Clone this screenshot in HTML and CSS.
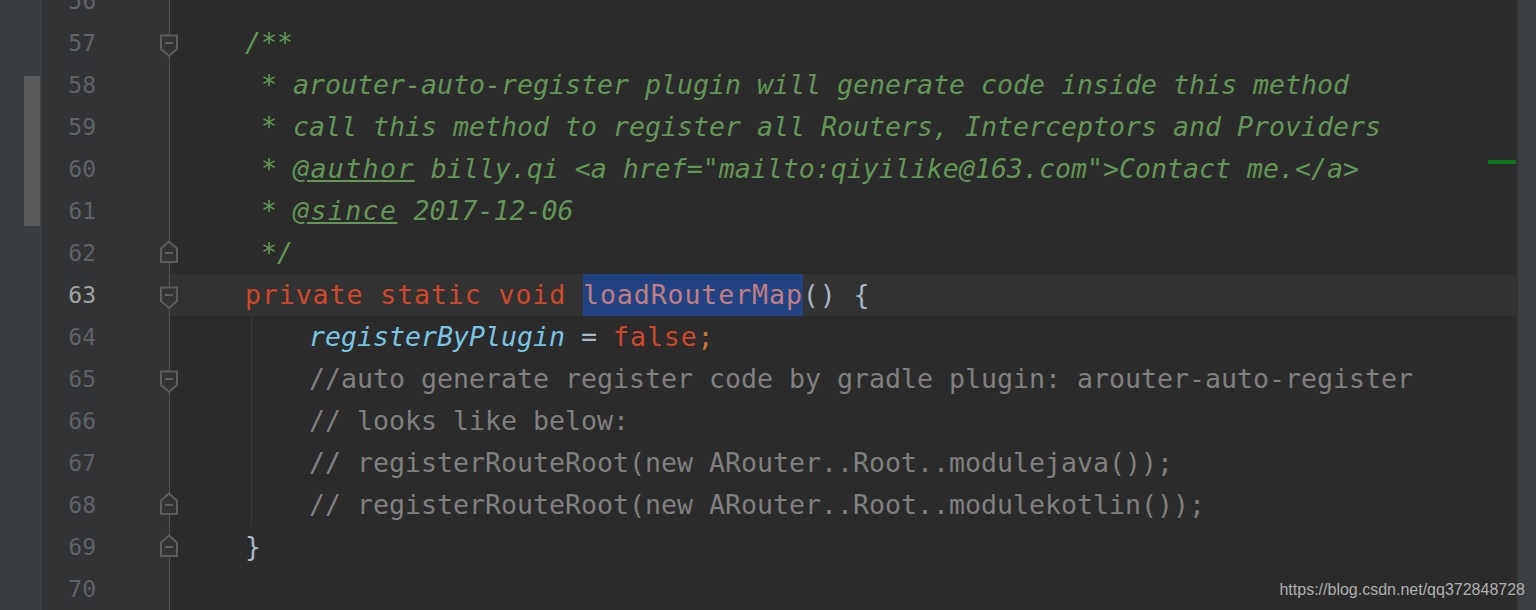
FILE: index.html
```html
<!DOCTYPE html>
<html lang="en">
<head>
    <meta charset="UTF-8">
    <meta name="viewport" content="width=device-width, initial-scale=1.0">
    <title>ARouter - LogisticsCenter.java</title>
    <link rel="stylesheet" href="styles.css">
</head>
<body>
    <div class="ide">
        <aside class="side">
            <div class="thumb"></div>
        </aside>

        <main class="editor">
            <div class="lines">
                <div class="row">
                    <div class="gutter"><span class="num">56</span></div>
                    <div class="code"></div>
                </div>
                <div class="row">
                    <div class="gutter">
                        <span class="num">57</span>
                        <svg class="fold fold-open" width="20" height="24" viewBox="0 0 20 24"><path d="M2 1.5 H18 V15 L10 22 L2 15 Z"/><line x1="6" y1="9" x2="14" y2="9"/></svg>
                    </div>
                    <div class="code"><span class="doc">    /**</span></div>
                </div>
                <div class="row">
                    <div class="gutter"><span class="num">58</span></div>
                    <div class="code"><span class="doc">     * arouter-auto-register plugin will generate code inside this method</span></div>
                </div>
                <div class="row">
                    <div class="gutter"><span class="num">59</span></div>
                    <div class="code"><span class="doc">     * call this method to register all Routers, Interceptors and Providers</span></div>
                </div>
                <div class="row">
                    <div class="gutter"><span class="num">60</span></div>
                    <div class="code"><span class="doc">     * <span class="tag">@author</span> billy.qi &lt;a href="mailto:qiyilike@163.com"&gt;Contact me.&lt;/a&gt;</span></div>
                </div>
                <div class="row">
                    <div class="gutter"><span class="num">61</span></div>
                    <div class="code"><span class="doc">     * <span class="tag">@since</span> 2017-12-06</span></div>
                </div>
                <div class="row">
                    <div class="gutter">
                        <span class="num">62</span>
                        <svg class="fold fold-close" width="20" height="24" viewBox="0 0 20 24"><path d="M2 22 H18 V8.5 L10 1.5 L2 8.5 Z"/><line x1="6" y1="13" x2="14" y2="13"/></svg>
                    </div>
                    <div class="code"><span class="doc">     */</span></div>
                </div>
                <div class="row">
                    <div class="gutter">
                        <span class="num current">63</span>
                        <svg class="fold fold-open" width="20" height="24" viewBox="0 0 20 24"><path d="M2 1.5 H18 V15 L10 22 L2 15 Z"/><line x1="6" y1="9" x2="14" y2="9"/></svg>
                    </div>
                    <div class="code current">    <span class="wide"><span class="kw">private static void</span> <span class="selected">loadRouterMap</span><span class="plain">() {</span></span></div>
                </div>
                <div class="row">
                    <div class="gutter"><span class="num">64</span></div>
                    <div class="code guide">        <span class="field">registerByPlugin</span> <span class="plain">=</span> <span class="kw wide">false</span><span class="semi">;</span></div>
                </div>
                <div class="row">
                    <div class="gutter">
                        <span class="num">65</span>
                        <svg class="fold fold-open" width="20" height="24" viewBox="0 0 20 24"><path d="M2 1.5 H18 V15 L10 22 L2 15 Z"/><line x1="6" y1="9" x2="14" y2="9"/></svg>
                    </div>
                    <div class="code guide">        <span class="comment">//auto generate register code by gradle plugin: arouter-auto-register</span></div>
                </div>
                <div class="row">
                    <div class="gutter"><span class="num">66</span></div>
                    <div class="code guide">        <span class="comment">// looks like below:</span></div>
                </div>
                <div class="row">
                    <div class="gutter"><span class="num">67</span></div>
                    <div class="code guide">        <span class="comment">// registerRouteRoot(new ARouter..Root..modulejava());</span></div>
                </div>
                <div class="row">
                    <div class="gutter">
                        <span class="num">68</span>
                        <svg class="fold fold-close" width="20" height="24" viewBox="0 0 20 24"><path d="M2 22 H18 V8.5 L10 1.5 L2 8.5 Z"/><line x1="6" y1="13" x2="14" y2="13"/></svg>
                    </div>
                    <div class="code guide">        <span class="comment">// registerRouteRoot(new ARouter..Root..modulekotlin());</span></div>
                </div>
                <div class="row">
                    <div class="gutter">
                        <span class="num">69</span>
                        <svg class="fold fold-close" width="20" height="24" viewBox="0 0 20 24"><path d="M2 22 H18 V8.5 L10 1.5 L2 8.5 Z"/><line x1="6" y1="13" x2="14" y2="13"/></svg>
                    </div>
                    <div class="code"><span class="plain">    }</span></div>
                </div>
                <div class="row">
                    <div class="gutter"><span class="num">70</span></div>
                    <div class="code"></div>
                </div>
            </div>

            <div class="stripe-mark"></div>
        </main>

        <div class="vscroll"></div>

        <div class="watermark">https://blog.csdn.net/qq372848728</div>
    </div>
</body>
</html>
```

FILE: styles.css
```css
/* General Reset */
* {
    margin: 0;
    padding: 0;
    box-sizing: border-box;
}

body {
    background-color: #2b2b2b;
    overflow: hidden;
}

.ide {
    position: relative;
    display: flex;
    width: 1536px;
    height: 610px;
    overflow: hidden;
}

/* Left tool strip with scroll thumb */
.side {
    width: 42px;
    flex-shrink: 0;
    background-color: #3b3e40;
}

.thumb {
    width: 16px;
    height: 150px;
    margin: 76px 0 0 24px;
    background-color: #595b5d;
}

/* Editor */
.editor {
    position: relative;
    flex: 1;
    background-color: #2b2b2b;
    overflow: hidden;
}

.lines {
    margin-top: -20px;
}

.row {
    display: grid;
    grid-template-columns: 128px 1fr;
    height: 42px;
}

.gutter {
    position: relative;
    display: flex;
    align-items: center;
    background-color: #313335;
    border-right: 1px solid #555658;
}

.num {
    width: 54px;
    text-align: right;
    font-family: "DejaVu Sans Mono", monospace;
    font-size: 23px;
    color: #606366;
}

.num.current {
    color: #a4a3a3;
}

/* Fold markers sit over the gutter edge */
.fold {
    position: absolute;
    left: 117px;
    fill: #313335;
    stroke: #5b5d5f;
    stroke-width: 2;
}

.fold-open {
    top: 12px;
}

.fold-close {
    top: 8px;
}

.code {
    padding-left: 11px;
    font-family: "DejaVu Sans Mono", monospace;
    font-size: 26.58px;
    line-height: 42px;
    white-space: pre;
    color: #a9b7c6;
}

.code.current {
    background-color: #323232;
}

.code.guide {
    background: linear-gradient(#393939, #393939) no-repeat 81px 0 / 1px 100%;
}

.wide {
    letter-spacing: 0.9px;
}

/* Syntax colours */
.doc {
    color: #629755;
    font-style: italic;
}

.tag {
    text-decoration: underline;
    letter-spacing: 1.4px;
}

.kw {
    color: #d1472a;
}

.selected {
    display: inline-block;
    line-height: 42px;
    background-color: #214283;
    color: #c27e7e;
}

.plain {
    color: #a9b7c6;
}

.field {
    color: #79c5e6;
    font-style: italic;
}

.semi {
    color: #cc7832;
}

.comment {
    color: #808080;
}

/* Error stripe mark */
.stripe-mark {
    position: absolute;
    top: 160px;
    left: 1446px;
    width: 28px;
    height: 4px;
    background-color: #10791b;
}

/* Right scrollbar */
.vscroll {
    width: 20px;
    flex-shrink: 0;
    background-color: #3c3f41;
    border-left: 2px solid #313335;
}

.watermark {
    position: absolute;
    right: 11px;
    bottom: 12px;
    font-family: "Liberation Sans", Arial, sans-serif;
    font-size: 16px;
    line-height: 16px;
    color: #b0b0b0;
}
```
